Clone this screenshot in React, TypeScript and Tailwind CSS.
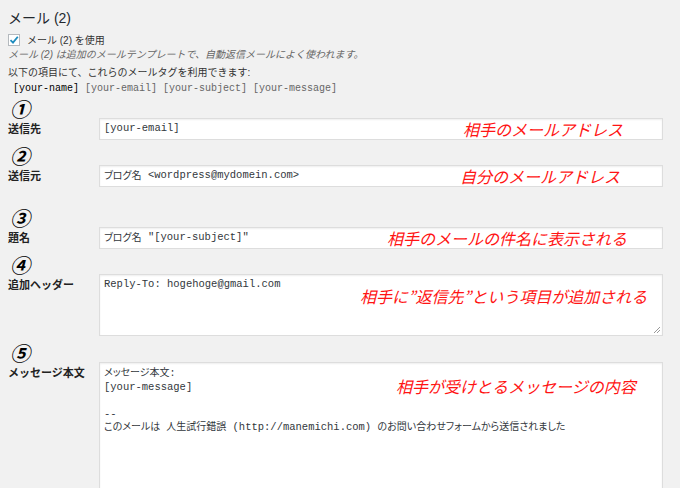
import React from 'react';

const sans = 'font-["Liberation_Sans","Noto_Sans_CJK_JP",sans-serif]';
const mono = 'font-["Liberation_Mono","Noto_Sans_CJK_JP",monospace]';
const note = 'absolute whitespace-nowrap italic text-[16px] leading-[20px] text-[#ff1414] font-["Noto_Sans_CJK_JP",sans-serif]';
const ja = 'text-[10px] [font-feature-settings:"palt"]';

function Num({ n }: { n: string }) {
  return (
    <div className='h-[19px] pl-[2px] text-[20px] leading-[19px] italic font-bold text-black font-["Noto_Sans_CJK_JP",sans-serif]'>
      {n}
    </div>
  );
}

function Label({ children, top }: { children: React.ReactNode; top?: boolean }) {
  return (
    <div className={`w-[91px] shrink-0 text-[11px] font-bold text-[#222] ${top ? 'pt-[3px]' : ''}`}>
      {children}
    </div>
  );
}

export default function App() {
  return (
    <div className={`w-[680px] h-[488px] overflow-hidden bg-[#f1f1f1] px-2 pt-[9px] text-[#333] ${sans}`}>
      <h2 className="text-[14px] leading-[18px] text-[#23282d]">メール (2)</h2>

      <div className="mt-[6px] flex items-center gap-[7px] h-[14px]">
        <span className="w-[12px] h-[12px] border border-[#b4b9be] bg-white flex items-center justify-center">
          <svg width="10" height="10" viewBox="0 0 10 10">
            <path d="M1.5 5.2 L4 7.6 L8.8 1.8" stroke="#1e8cbe" strokeWidth="1.8" fill="none" />
          </svg>
        </span>
        <span className="text-[10px] text-[#333]">メール (2) を使用</span>
      </div>
      <p className="mt-[1px] text-[10px] leading-[14px] italic text-[#666]">
        メール (2) は追加のメールテンプレートで、自動返信メールによく使われます。
      </p>
      <p className="mt-[4px] text-[10px] leading-[14px] text-[#333]">以下の項目にて、これらのメールタグを利用できます:</p>
      <p className={`mt-[2px] pl-[5px] text-[10px] leading-[14px] text-[#666] ${mono}`}>
        <span className="text-black">[your-name]</span> [your-email] [your-subject] [your-message]
      </p>

      <div className="mt-[3px]">
        <Num n="①" />
        <div className="flex items-center">
          <Label>送信先</Label>
          <div className={`relative w-[564px] h-[22px] bg-white border border-[#ddd] shadow-[inset_0_1px_2px_rgba(0,0,0,0.07)] px-[4px] flex items-center text-[10.5px] text-[#32373c] whitespace-pre ${mono}`}>
            [your-email]
            <span className={`${note} left-[363px] top-[0px]`}>相手のメールアドレス</span>
          </div>
        </div>
      </div>

      <div className="mt-[6px]">
        <Num n="②" />
        <div className="flex items-center">
          <Label>送信元</Label>
          <div className={`relative w-[564px] h-[22px] bg-white border border-[#ddd] shadow-[inset_0_1px_2px_rgba(0,0,0,0.07)] px-[4px] flex items-center text-[10.5px] text-[#32373c] whitespace-pre ${mono}`}>
            <span className={ja}>ブログ名</span> &lt;wordpress@mydomein.com&gt;
            <span className={`${note} left-[360px] top-[0px]`}>自分のメールアドレス</span>
          </div>
        </div>
      </div>

      <div className="mt-[21px]">
        <Num n="③" />
        <div className="flex items-center">
          <Label>題名</Label>
          <div className={`relative w-[564px] h-[22px] bg-white border border-[#ddd] shadow-[inset_0_1px_2px_rgba(0,0,0,0.07)] px-[4px] flex items-center text-[10.5px] text-[#32373c] whitespace-pre ${mono}`}>
            <span className={ja}>ブログ名</span> "[your-subject]"
            <span className={`${note} left-[287px] top-[0px]`}>相手のメールの件名に表示される</span>
          </div>
        </div>
      </div>

      <div className="mt-[6px]">
        <Num n="④" />
        <div className="flex items-start">
          <Label top>追加ヘッダー</Label>
          <div className={`relative w-[564px] h-[62px] bg-white border border-[#ddd] shadow-[inset_0_1px_2px_rgba(0,0,0,0.07)] px-[4px] pt-[3px] text-[10.5px] leading-[13.5px] text-[#32373c] ${mono}`}>
            Reply-To: hogehoge@gmail.com
            <span className={`${note} left-[260px] top-[11px]`}>相手に”返信先”という項目が追加される</span>
            <svg className="absolute right-[1px] bottom-[1px]" width="8" height="8" viewBox="0 0 8 8">
              <path d="M7 1 L1 7 M7 4 L4 7" stroke="#999" strokeWidth="1" />
            </svg>
          </div>
        </div>
      </div>

      <div className="mt-[7px]">
        <Num n="⑤" />
        <div className="flex items-start">
          <Label top>メッセージ本文</Label>
          <div className={`relative w-[564px] h-[140px] bg-white border border-[#ddd] shadow-[inset_0_1px_2px_rgba(0,0,0,0.07)] px-[4px] pt-[4px] text-[10.5px] leading-[13.5px] text-[#32373c] whitespace-pre ${mono}`}>
            <div><span className={ja}>メッセージ本文:</span></div>
            <div>[your-message]</div>
            <div>&nbsp;</div>
            <div>--</div>
            <div>
              <span className={ja}>このメールは 人生試行錯誤</span> (http://manemichi.com) <span className={ja}>のお問い合わせフォームから送信されました</span>
            </div>
            <span className={`${note} left-[296px] top-[13px]`}>相手が受けとるメッセージの内容</span>
          </div>
        </div>
      </div>
    </div>
  );
}
